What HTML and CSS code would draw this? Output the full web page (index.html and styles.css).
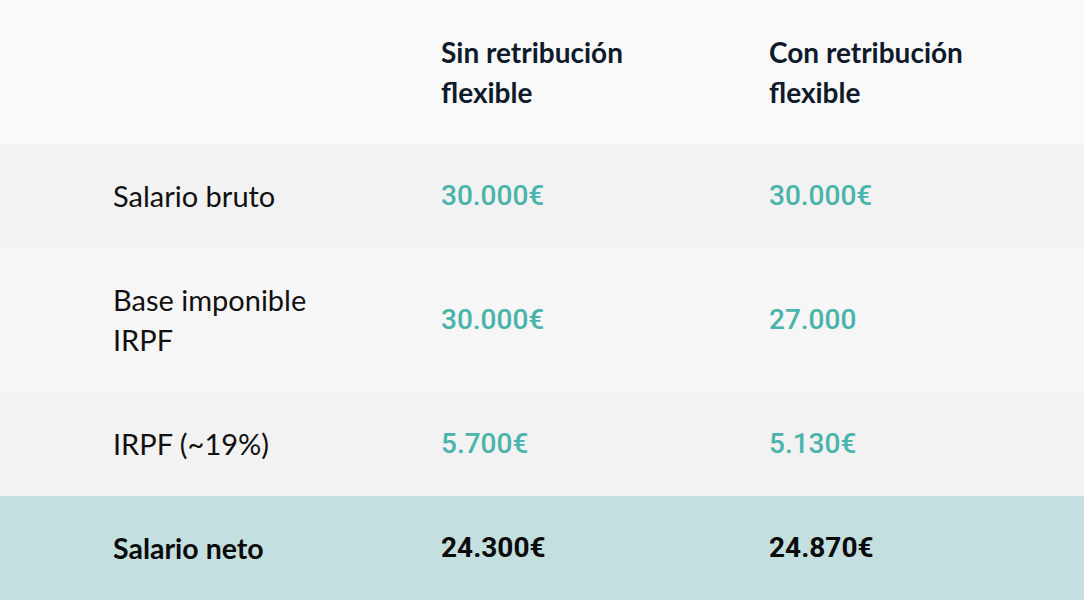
FILE: index.html
```html
<!DOCTYPE html>
<html lang="es">
<head>
<meta charset="utf-8">
<link rel="stylesheet" href="styles.css">
</head>
<body>
<div class="table">
  <div class="row head">
    <div class="cell"></div>
    <div class="cell th">Sin retribución<br>flexible</div>
    <div class="cell th">Con retribución<br>flexible</div>
  </div>
  <div class="row dark">
    <div class="cell label">Salario bruto</div>
    <div class="cell num">30.000€</div>
    <div class="cell num">30.000€</div>
  </div>
  <div class="row light">
    <div class="cell label">Base imponible<br>IRPF</div>
    <div class="cell num">30.000€</div>
    <div class="cell num">27.000</div>
  </div>
  <div class="row dark">
    <div class="cell label">IRPF (~19%)</div>
    <div class="cell num">5.700€</div>
    <div class="cell num">5.130€</div>
  </div>
  <div class="row total">
    <div class="cell label strong">Salario neto</div>
    <div class="cell num strong-num">24.300€</div>
    <div class="cell num strong-num">24.870€</div>
  </div>
</div>
</body>
</html>
```
FILE: styles.css
```css
html, body {
  margin: 0;
  padding: 0;
  background: #f9f9f9;
}
.table {
  width: 1084px;
  height: 600px;
  display: flex;
  flex-direction: column;
}
.row {
  display: grid;
  grid-template-columns: 328px 328px 1fr;
  padding-left: 113px;
  align-items: center;
}
.cell {
  padding: 32px 0;
  line-height: 40px;
}
.head { background: #f9f9f9; }
.dark { background: #f2f2f2; }
.light { background: #f6f6f6; }
.total { background: #c4dfe0; }
.th {
  font-family: "Lato", sans-serif;
  font-weight: 700;
  font-size: 28px;
  color: #0f1b2a;
}
.label {
  font-family: "Lato", sans-serif;
  font-weight: 400;
  font-size: 29px;
  color: #111111;
}
.num {
  font-family: "Roboto", sans-serif;
  font-weight: 500;
  font-size: 28px;
  color: #4ab4ac;
}
.strong {
  font-weight: 700;
  font-size: 28.5px;
  color: #0b0b0b;
}
.strong-num {
  font-weight: 700;
  color: #0b0b0b;
}
```
